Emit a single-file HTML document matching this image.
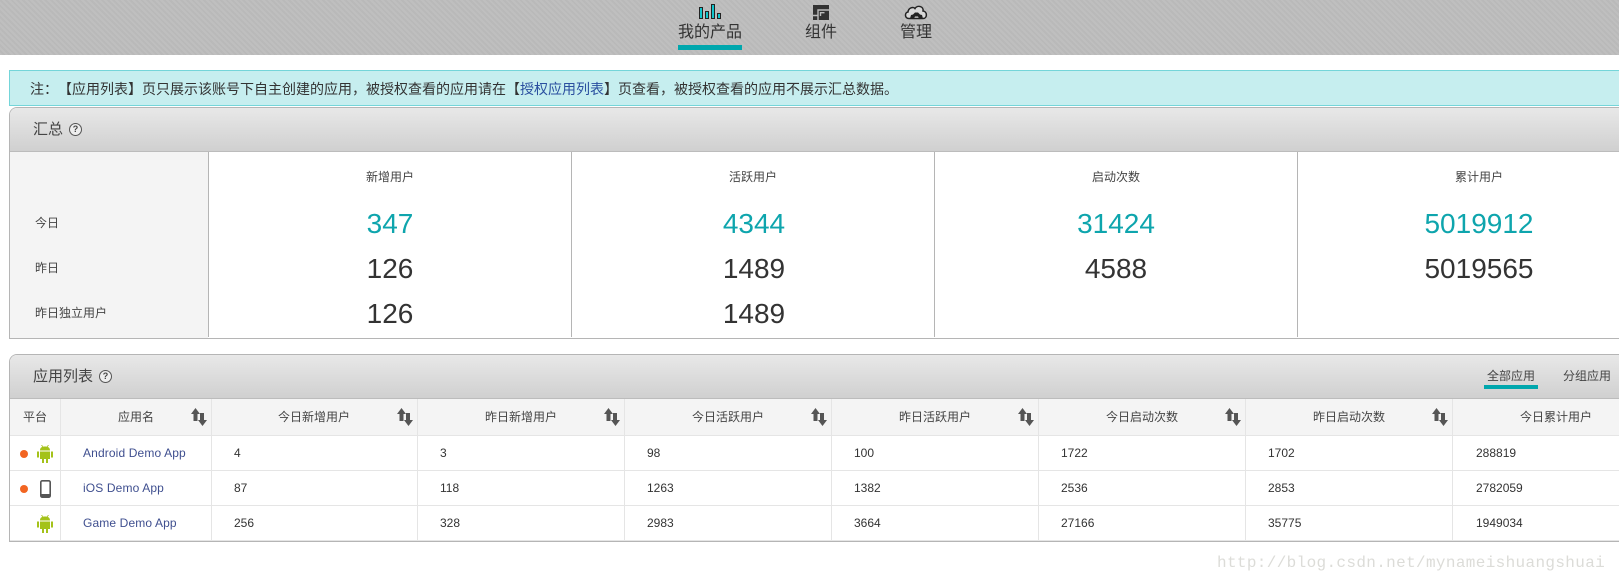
<!DOCTYPE html>
<html><head><meta charset="utf-8">
<style>
html,body{margin:0;padding:0;background:#fff;}
body{width:1619px;height:582px;overflow:hidden;position:relative;font-family:"Liberation Sans","Noto Sans CJK SC",sans-serif;color:#333;font-size:12px;text-spacing-trim:space-all;}
.a{position:absolute;white-space:nowrap;}
.c{position:absolute;white-space:nowrap;text-align:center;}
.n{font-size:28px;line-height:32px;}
.t{color:#0ea5ad;}
.l{position:absolute;background:#b5b5b5;}
.g{position:absolute;background:#e5e5e5;}
.h{line-height:16px;font-size:12px;color:#444;}
.r{line-height:16px;font-size:12px;color:#333;}
.b{color:#3f4f8f;letter-spacing:.13px;}
.q{position:absolute;box-sizing:border-box;width:13px;height:13px;border:1.5px solid #555;border-radius:50%;font-size:9px;font-weight:bold;line-height:10px;color:#444;background:#eee;text-align:center;}
</style></head><body>
<div class="a" style="left:0;top:0;width:1619px;height:55px;background:#bdbdbd;background-image:repeating-linear-gradient(45deg,rgba(255,255,255,.03) 0 2px,rgba(0,0,0,.02) 2px 4px)"></div>
<svg class="a" style="left:699px;top:4px" width="22" height="15"><g fill="#12c5cc" stroke="#222" stroke-width="1"><rect x="0.500" y="3.500" width="3" height="11"/><rect x="6.500" y="7.500" width="3" height="7"/><rect x="12.500" y="0.500" width="3" height="14"/><rect x="18.500" y="9.500" width="3" height="5"/></g></svg>
<div class="c" style="left:670px;width:80px;top:23px;font-size:16px;line-height:20px;color:#333">我的产品</div>
<div class="a" style="left:678px;top:45px;width:64px;height:5px;background:#00a7ad"></div>
<svg class="a" style="left:813px;top:5px" width="17" height="15"><rect width="16" height="15" fill="#333"/><path d="M16 5H5V10.500H0M5 10.500V15M7.500 11V7.700H11.500" fill="none" stroke="#bdbdbd" stroke-width="1.400"/></svg>
<div class="c" style="left:791px;width:60px;top:23px;font-size:16px;line-height:20px;color:#333">组件</div>
<svg class="a" style="left:904px;top:4px" width="24" height="16"><path d="M5 14.500C0.500 14.500 0.500 8.500 4 8C4.500 3.500 9.500 2.500 11 4.500C13.500 0.500 20 2.500 19 7C23.500 7.500 23.500 14.500 19 14.500Z" fill="#d8d8d8" stroke="#222" stroke-width="1.500"/><path d="M6 14.500L7 11L9 10.500L11 8.500H14L16 10.500L18 11L19 14.500H15L14 12.500H11L10 14.500Z" fill="#222"/></svg>
<div class="c" style="left:886px;width:60px;top:23px;font-size:16px;line-height:20px;color:#333">管理</div>

<div class="a" style="left:9px;top:70px;width:1620px;height:36px;background:#c6eeef;border:1px solid #74d5d9;box-sizing:border-box"></div>
<div class="a" style="left:30px;top:80px;font-size:14px;line-height:18px;color:#333">注：【应用列表】页只展示该账号下自主创建的应用，被授权查看的应用请在【<span style="color:#2a4f9f">授权应用列表</span>】页查看，被授权查看的应用不展示汇总数据。</div>

<div class="a" style="left:9px;top:107px;width:1620px;height:232px;border:1px solid #b5b5b5;border-right:0;border-radius:8px 0 0 0;box-sizing:border-box;background:#fff"></div>
<div class="a" style="left:10px;top:108px;width:1610px;height:43px;background:linear-gradient(#e8e8e8,#d0d0d0);border-radius:7px 0 0 0"></div>
<div class="l" style="left:10px;top:151px;width:1610px;height:1px;background:#bcbcbc"></div>
<div class="a" style="left:10px;top:152px;width:198px;height:186px;background:#f4f4f4"></div>
<div class="a" style="left:33px;top:120px;font-size:15px;line-height:20px;color:#444">汇总</div>
<div class="q" style="left:69px;top:123px">?</div>
<div class="l" style="left:208px;top:152px;width:1px;height:185px"></div>
<div class="l" style="left:571px;top:152px;width:1px;height:185px"></div>
<div class="l" style="left:934px;top:152px;width:1px;height:185px"></div>
<div class="l" style="left:1297px;top:152px;width:1px;height:185px"></div>

<div class="c h" style="left:209px;width:362px;top:169px">新增用户</div>
<div class="c h" style="left:572px;width:362px;top:169px">活跃用户</div>
<div class="c h" style="left:935px;width:362px;top:169px">启动次数</div>
<div class="c h" style="left:1298px;width:362px;top:169px">累计用户</div>

<div class="a h" style="left:35px;top:215px">今日</div>
<div class="a h" style="left:35px;top:260px">昨日</div>
<div class="a h" style="left:35px;top:305px">昨日独立用户</div>

<div class="c n t" style="left:209px;width:362px;top:208px">347</div>
<div class="c n t" style="left:573px;width:362px;top:208px">4344</div>
<div class="c n t" style="left:935px;width:362px;top:208px">31424</div>
<div class="c n t" style="left:1298px;width:362px;top:208px">5019912</div>
<div class="c n" style="left:209px;width:362px;top:253px">126</div>
<div class="c n" style="left:573px;width:362px;top:253px">1489</div>
<div class="c n" style="left:935px;width:362px;top:253px">4588</div>
<div class="c n" style="left:1298px;width:362px;top:253px">5019565</div>
<div class="c n" style="left:209px;width:362px;top:298px">126</div>
<div class="c n" style="left:573px;width:362px;top:298px">1489</div>

<div class="a" style="left:9px;top:354px;width:1620px;height:188px;border:1px solid #b5b5b5;border-right:0;border-radius:8px 0 0 0;box-sizing:border-box;background:#fff"></div>
<div class="a" style="left:10px;top:355px;width:1610px;height:43px;background:linear-gradient(#e8e8e8,#d0d0d0);border-radius:7px 0 0 0"></div>
<div class="l" style="left:10px;top:398px;width:1610px;height:1px;background:#bcbcbc"></div>
<div class="a" style="left:10px;top:399px;width:1610px;height:36px;background:#f4f4f4"></div>
<div class="a" style="left:33px;top:367px;font-size:15px;line-height:20px;color:#444">应用列表</div>
<div class="q" style="left:99px;top:370px">?</div>
<div class="a h" style="left:1487px;top:368px">全部应用</div>
<div class="a" style="left:1484px;top:385px;width:54px;height:4px;background:#00a7ad"></div>
<div class="a h" style="left:1563px;top:368px">分组应用</div>

<div class="g" style="left:10px;top:435px;width:1610px;height:1px"></div>
<div class="g" style="left:10px;top:470px;width:1610px;height:1px"></div>
<div class="g" style="left:10px;top:505px;width:1610px;height:1px"></div>
<div class="g" style="left:10px;top:540px;width:1610px;height:1px"></div>
<div class="g" style="left:60px;top:399px;width:1px;height:142px"></div>
<div class="g" style="left:211px;top:399px;width:1px;height:142px"></div>
<div class="g" style="left:417px;top:399px;width:1px;height:142px"></div>
<div class="g" style="left:624px;top:399px;width:1px;height:142px"></div>
<div class="g" style="left:831px;top:399px;width:1px;height:142px"></div>
<div class="g" style="left:1038px;top:399px;width:1px;height:142px"></div>
<div class="g" style="left:1245px;top:399px;width:1px;height:142px"></div>
<div class="g" style="left:1452px;top:399px;width:1px;height:142px"></div>

<div class="a h" style="left:23px;top:409px">平台</div>
<div class="a h" style="left:118px;top:409px">应用名</div>
<div class="a h" style="left:278px;top:409px">今日新增用户</div>
<div class="a h" style="left:485px;top:409px">昨日新增用户</div>
<div class="a h" style="left:692px;top:409px">今日活跃用户</div>
<div class="a h" style="left:899px;top:409px">昨日活跃用户</div>
<div class="a h" style="left:1106px;top:409px">今日启动次数</div>
<div class="a h" style="left:1313px;top:409px">昨日启动次数</div>
<div class="a h" style="left:1520px;top:409px">今日累计用户</div>

<svg width="0" height="0" style="position:absolute"><defs>
<symbol id="s" viewBox="0 0 16 18"><path d="M4.500 0L9 6H6.500V13H2.500V6H0Z M9 5H13V12H16L11.500 18L7 12H9Z" fill="#555"/></symbol>
<symbol id="d" viewBox="0 0 16 18"><path d="M3 6.500H13V14H11V18H9V14H7V18H5V14H3Z M0 6.500H2V12.500H0Z M14 6.500H16V12.500H14Z M3 5.500C3 2.500 5 1.500 8 1.500C11 1.500 13 2.500 13 5.500Z" fill="#a4c21a"/><path d="M4.500 0L6 2M11.500 0L10 2" stroke="#a4c21a" stroke-width=".8"/></symbol>
</defs></svg>
<svg class="a" style="left:191px;top:408px" width="16" height="18"><use href="#s"/></svg>
<svg class="a" style="left:397px;top:408px" width="16" height="18"><use href="#s"/></svg>
<svg class="a" style="left:604px;top:408px" width="16" height="18"><use href="#s"/></svg>
<svg class="a" style="left:811px;top:408px" width="16" height="18"><use href="#s"/></svg>
<svg class="a" style="left:1018px;top:408px" width="16" height="18"><use href="#s"/></svg>
<svg class="a" style="left:1225px;top:408px" width="16" height="18"><use href="#s"/></svg>
<svg class="a" style="left:1432px;top:408px" width="16" height="18"><use href="#s"/></svg>

<div class="a" style="left:20px;top:450px;width:8px;height:8px;border-radius:50%;background:#f26522"></div>
<div class="a" style="left:20px;top:485px;width:8px;height:8px;border-radius:50%;background:#f26522"></div>
<svg class="a" style="left:37px;top:445px" width="16" height="18"><use href="#d"/></svg>
<svg class="a" style="left:40px;top:480px" width="11" height="18"><rect x="0.800" y="0.800" width="9.400" height="16.400" rx="1.500" fill="#fff" stroke="#555" stroke-width="1.600"/><rect x="1" y="14" width="9" height="3.200" fill="#555"/></svg>
<svg class="a" style="left:37px;top:515px" width="16" height="18"><use href="#d"/></svg>

<div class="a r b" style="left:83px;top:445px">Android Demo App</div>
<div class="a r" style="left:234px;top:445px">4</div>
<div class="a r" style="left:440px;top:445px">3</div>
<div class="a r" style="left:647px;top:445px">98</div>
<div class="a r" style="left:854px;top:445px">100</div>
<div class="a r" style="left:1061px;top:445px">1722</div>
<div class="a r" style="left:1268px;top:445px">1702</div>
<div class="a r" style="left:1476px;top:445px">288819</div>

<div class="a r b" style="left:83px;top:480px">iOS Demo App</div>
<div class="a r" style="left:234px;top:480px">87</div>
<div class="a r" style="left:440px;top:480px">118</div>
<div class="a r" style="left:647px;top:480px">1263</div>
<div class="a r" style="left:854px;top:480px">1382</div>
<div class="a r" style="left:1061px;top:480px">2536</div>
<div class="a r" style="left:1268px;top:480px">2853</div>
<div class="a r" style="left:1476px;top:480px">2782059</div>

<div class="a r b" style="left:83px;top:515px">Game Demo App</div>
<div class="a r" style="left:234px;top:515px">256</div>
<div class="a r" style="left:440px;top:515px">328</div>
<div class="a r" style="left:647px;top:515px">2983</div>
<div class="a r" style="left:854px;top:515px">3664</div>
<div class="a r" style="left:1061px;top:515px">27166</div>
<div class="a r" style="left:1268px;top:515px">35775</div>
<div class="a r" style="left:1476px;top:515px">1949034</div>

<div class="a" style="left:1217px;top:553px;font-family:'Liberation Mono',monospace;font-size:16px;line-height:20px;color:#dcdcd8;letter-spacing:.35px">http://blog.csdn.net/mynameishuangshuai</div>
</body></html>
